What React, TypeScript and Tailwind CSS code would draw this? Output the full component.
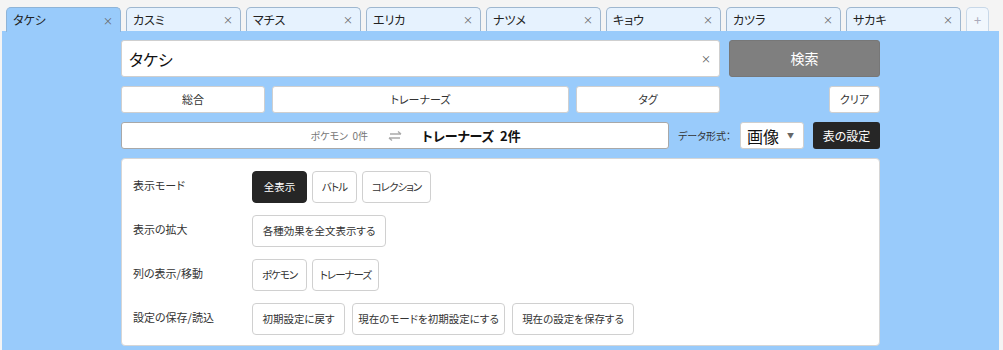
import React from "react";

const tabs = ["タケシ", "カスミ", "マチス", "エリカ", "ナツメ", "キョウ", "カツラ", "サカキ"];

const font = { fontFamily: '"Noto Sans CJK JP", "Noto Sans", sans-serif' };

function Btn({ children, dark, w }: { children: React.ReactNode; dark?: boolean; w: string }) {
  return (
    <button
      className={
        w +
        " h-[32px] rounded-[4px] border leading-none whitespace-nowrap flex items-center justify-center [font-feature-settings:'palt'] " +
        (dark ? "bg-[#262626] border-[#262626] text-white" : "bg-white border-[#d0d0d0] text-[#333]")
      }
    >
      {children}
    </button>
  );
}

const K = "text-[10.5px] tracking-[-1px]";
const J = "text-[10.5px]";

const rows: { label: string; gap: string; items: [string, string][] }[] = [
  {
    label: "表示モード",
    gap: "gap-[5px]",
    items: [
      ["全表示", "w-[55px] " + J],
      ["バトル", "w-[45px] " + K],
      ["コレクション", "w-[69px] " + K],
    ],
  },
  { label: "表示の拡大", gap: "gap-[5px]", items: [["各種効果を全文表示する", "w-[134px] " + J]] },
  {
    label: "列の表示/移動",
    gap: "gap-[5px]",
    items: [
      ["ポケモン", "w-[55px] " + K],
      ["トレーナーズ", "w-[67px] " + K],
    ],
  },
  {
    label: "設定の保存/読込",
    gap: "gap-[7px]",
    items: [
      ["初期設定に戻す", "w-[93px] " + J],
      ["現在のモードを初期設定にする", "w-[153px] " + J],
      ["現在の設定を保存する", "w-[122px] " + J],
    ],
  },
];

export default function App() {
  return (
    <div className="w-[1003px] h-[350px] bg-[#f4f4f4] overflow-hidden [font-feature-settings:'palt']" style={font}>
      <div className="flex gap-[5px] pl-[6px] pt-[7px] h-[31px]">
        {tabs.map((t, i) => (
          <div
            key={t}
            className={
              "relative w-[115px] h-[24px] rounded-t-[5px] border border-b-0 flex items-center pl-[6px] pr-[7px] text-[12px] text-[#222] " +
              (i === 0 ? "bg-[#99cbfb] border-[#8eb4d8] h-[25px] z-10" : "bg-[#e6f2fe] border-[#9fb7cf]")
            }
          >
            <span className="flex-1">{t}</span>
            <span className="text-[10px] text-[#666]">×</span>
          </div>
        ))}
        <div className="w-[23px] h-[24px] rounded-t-[5px] border border-b-0 border-[#c8d8e8] bg-[#f1f7fd] flex items-center justify-center text-[13px] text-[#aab]">
          +
        </div>
      </div>
      <div className="ml-[2px] mr-[4px] h-[319px] bg-[#99cbfb] pt-[9px]">
        <div className="w-[759px] mx-auto flex flex-col gap-[9px]">
          <div className="flex gap-[9px] h-[37px]">
            <div className="flex-1 bg-white border border-[#cfcfcf] rounded-[3px] flex items-center pl-[7px] pr-[8px]">
              <span className="flex-1 text-[16px] text-[#111]">タケシ</span>
              <span className="text-[10px] text-[#555]">×</span>
            </div>
            <button className="w-[151px] bg-[#7f7f7f] rounded-[3px] border border-[#777] text-white text-[14px]">検索</button>
          </div>
          <div className="flex h-[27px] text-[11px] text-[#333]">
            <div className="w-[144px] bg-white border border-[#cfcfcf] rounded-[3px] flex items-center justify-center">総合</div>
            <div className="ml-[7px] w-[297px] bg-white border border-[#cfcfcf] rounded-[3px] flex items-center justify-center">トレーナーズ</div>
            <div className="ml-[7px] w-[144px] bg-white border border-[#cfcfcf] rounded-[3px] flex items-center justify-center">タグ</div>
            <div className="ml-auto w-[51px] bg-white border border-[#cfcfcf] rounded-[3px] flex items-center justify-center">クリア</div>
          </div>
          <div className="flex h-[27px] items-center">
            <div className="w-[548px] h-full bg-white border border-[#a8a8a8] rounded-[3px] flex items-center">
              <div className="flex-1 text-right text-[10px] text-[#777]">ポケモン&nbsp;&nbsp;0件</div>
              <div className="w-[54px] flex justify-center">
                <svg width="16" height="12" viewBox="0 0 16 12" fill="none" stroke="#aaa" strokeWidth="1.4">
                  <path d="M3 4h11M11 1.5l3 2.5M2 8h11M5 10.5L2 8" />
                </svg>
              </div>
              <div className="flex-1 text-[13px] font-bold text-[#111]">トレーナーズ&nbsp;&nbsp;2件</div>
            </div>
            <div className="ml-[9px] w-[62px] text-[10px] text-[#333]">データ形式：</div>
            <div className="w-[64px] h-full bg-white border border-[#cfcfcf] rounded-[3px] flex items-center pl-[6px] pr-[9px]">
              <span className="flex-1 text-[16px] text-[#111]">画像</span>
              <span className="text-[7px] text-[#666]">▼</span>
            </div>
            <button className="ml-auto w-[67px] h-full bg-[#262626] rounded-[3px] text-white text-[12px]">表の設定</button>
          </div>
          <div className="bg-white border border-[#d6d6d6] rounded-[4px] px-[11px] pt-[12px] pb-[10px] flex flex-col gap-[12px]">
            {rows.map((row, ri) => (
              <div key={row.label} className="flex items-start">
                <div className="w-[119px] text-[11px] text-[#333] pt-[6px]">{row.label}</div>
                <div className={"flex " + row.gap}>
                  {row.items.map(([it, w], ii) => (
                    <Btn key={it} w={w} dark={ri === 0 && ii === 0}>
                      {it}
                    </Btn>
                  ))}
                </div>
              </div>
            ))}
          </div>
        </div>
      </div>
    </div>
  );
}
